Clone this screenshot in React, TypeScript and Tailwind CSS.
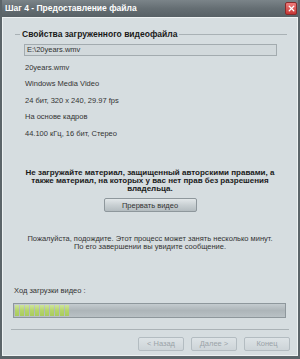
import { X } from "lucide-react";

const font = { fontFamily: '"Liberation Sans", Arial, sans-serif' };

const infoLines = [
  "20years.wmv",
  "Windows Media Video",
  "24 бит, 320 x 240, 29.97 fps",
  "На основе кадров",
  "44.100 кГц, 16 бит, Стерео"
];

const NavButton = ({ label }: { label: string }) => (
  <div className="flex h-[14px] w-[46px] items-center justify-center rounded-[2px] border border-[#b3bcc1] bg-gradient-to-b from-[#dde3e6] to-[#cdd4d8] text-[7.5px] text-[#9aa3a8]">
    {label}
  </div>
);

export default function App() {
  return (
    <div className="h-[359px] w-[300px] overflow-hidden bg-[#4c5458] p-0" style={font}>
      <div className="flex h-full flex-col border-x-2 border-b-[3px] border-[#5b6469]">
        {/* title bar */}
        <div className="flex h-[17px] shrink-0 items-center justify-between bg-gradient-to-b from-[#7b8489] via-[#656e73] to-[#586166] pl-[3px] pr-[1px]">
          <span className="text-[8.5px] font-bold text-white">Шаг 4 - Предоставление файла</span>
          <div className="flex h-[13px] w-[12px] items-center justify-center rounded-[2px] border border-[#8a2a2a] bg-gradient-to-b from-[#ef7b7b] to-[#c63535]">
            <X size={9} strokeWidth={3.5} className="text-white" />
          </div>
        </div>

        <div className="flex flex-1 flex-col border border-[#eef2f3] bg-[#d6dde0]">
          {/* group */}
          <div className="mt-[10px] flex items-center pl-[12px] pr-[10px]">
            <div className="h-px w-[5px] bg-[#a9b1b5]" />
            <span className="mx-[2px] text-[8.5px] font-bold text-[#1a1a1a]">Свойства загруженного видеофайла</span>
            <div className="h-px flex-1 bg-[#a9b1b5]" />
          </div>

          <div className="ml-[21px] mr-[20px] mt-[3px] flex h-[12px] items-center border border-[#a3abaf] bg-[#d2d9dc] pl-[2px] text-[7.5px] text-[#333]">
            E:\20years.wmv
          </div>

          <div className="ml-[22px] mt-[8px] flex flex-col gap-[9px] text-[7.5px] leading-[7.5px] text-[#333]">
            {infoLines.map((line) => (
              <span key={line}>{line}</span>
            ))}
          </div>

          <div className="mt-[32px] px-[20px] text-center text-[8px] font-bold leading-[8px] text-[#1a1a1a]">
            Не загружайте материал, защищенный авторскими правами, а также материал, на которых у вас нет прав без разрешения владельца.
          </div>

          <div className="mt-[5px] flex justify-center">
            <div className="flex h-[14px] w-[93px] items-center justify-center rounded-[2px] border border-[#8e979c] bg-gradient-to-b from-[#e2e7e9] via-[#c9d0d3] to-[#b4bcc0] text-[7.5px] text-[#333]">
              Прервать видео
            </div>
          </div>

          <div className="mt-[23px] text-center text-[7.5px] leading-[8px] text-[#333]">
            Пожалуйста, подождите. Этот процесс может занять несколько минут.
            <br />
            По его завершении вы увидите сообщение.
          </div>

          <div className="ml-[11px] mt-[34px] text-[7.5px] text-[#333]">Ход загрузки видео :</div>

          <div className="ml-[10px] mr-[11px] mt-[6px] flex h-[15px] border border-[#8e979c] bg-gradient-to-b from-[#c4cbcf] via-[#adb5b9] to-[#b9c1c5] p-[1px]">
            <div className="flex h-full gap-[1px]">
              {Array.from({ length: 11 }).map((_, i) => (
                <div key={i} className="h-full w-[4px] bg-gradient-to-b from-[#cfe59a] via-[#b4d46a] to-[#a9cb5c]" />
              ))}
            </div>
          </div>

          <div className="mx-[8px] mt-[11px] h-px bg-[#aab2b6]" />

          <div className="mr-[7px] mt-[7px] flex justify-end gap-[7px]">
            <NavButton label="< Назад" />
            <NavButton label="Далее >" />
            <NavButton label="Конец" />
          </div>
        </div>
      </div>
    </div>
  );
}
